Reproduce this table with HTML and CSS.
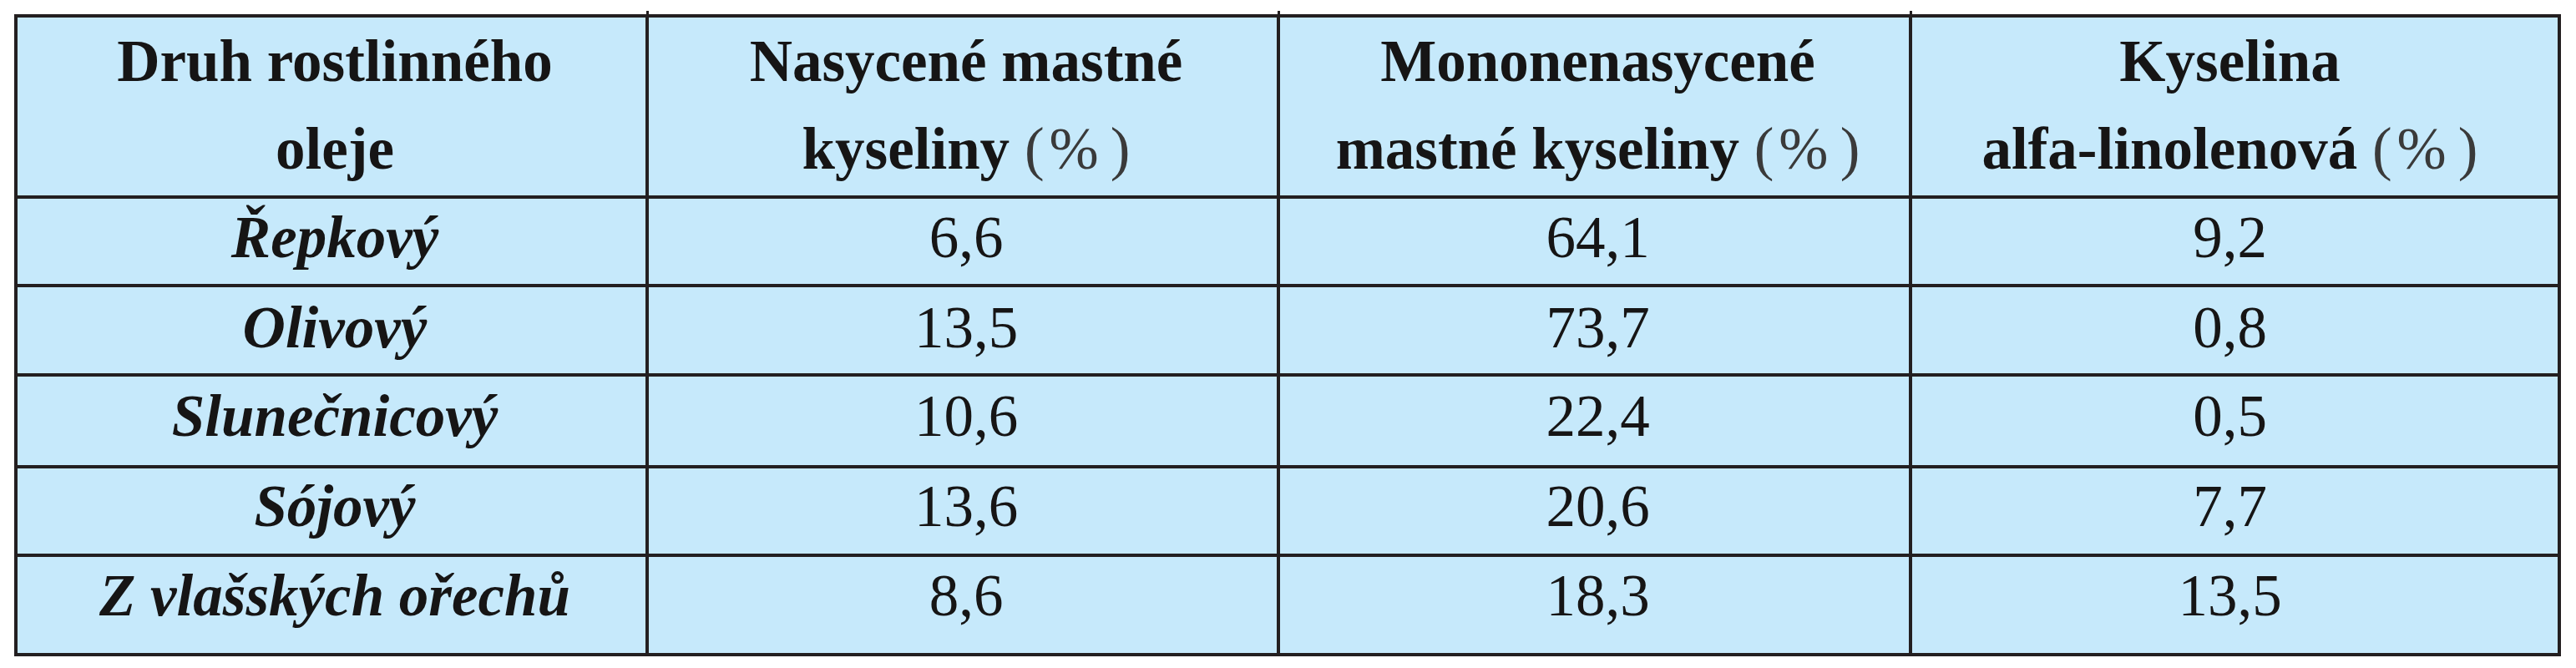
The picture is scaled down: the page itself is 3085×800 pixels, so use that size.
FILE: index.html
```html
<!DOCTYPE html>
<html lang="cs">
<head>
<meta charset="utf-8">
<title>Druh rostlinného oleje</title>
<link rel="stylesheet" href="styles.css">
</head>
<body>
<table class="oils">
  <colgroup>
    <col class="c1"><col class="c2"><col class="c3"><col class="c4">
  </colgroup>
  <thead>
    <tr class="head">
      <th>Druh rostlinného<br>oleje</th>
      <th>Nasycené mastné<br>kyseliny <span class="pct">(&#8202;%&#8201;)</span></th>
      <th>Mononenasycené<br>mastné kyseliny <span class="pct">(&#8202;%&#8201;)</span></th>
      <th>Kyselina<br>alfa-linolenová <span class="pct">(&#8202;%&#8201;)</span></th>
    </tr>
  </thead>
  <tbody>
    <tr class="r1"><td class="name">Řepkový</td><td>6,6</td><td>64,1</td><td>9,2</td></tr>
    <tr class="r2"><td class="name">Olivový</td><td>13,5</td><td>73,7</td><td>0,8</td></tr>
    <tr class="r3"><td class="name">Slunečnicový</td><td>10,6</td><td>22,4</td><td>0,5</td></tr>
    <tr class="r4"><td class="name">Sójový</td><td>13,6</td><td>20,6</td><td>7,7</td></tr>
    <tr class="r5"><td class="name">Z vlašských ořechů</td><td>8,6</td><td>18,3</td><td>13,5</td></tr>
  </tbody>
</table>
</body>
</html>
```
FILE: styles.css
```css
html, body {
  margin: 0;
  padding: 0;
  background: #ffffff;
}

body {
  padding: 17px 0 0 17px;
  font-family: "Liberation Serif", "Times New Roman", serif;
  color: #161515;
}

.oils {
  border-collapse: separate;
  border-spacing: 0;
  table-layout: fixed;
  width: 3050px;
  border-top: 4px solid #231f20;
  border-left: 4px solid #231f20;
  background: #c6e9fb;
}

.c1, .c2 { width: 756px; }
.c3 { width: 757px; }
.c4 { width: 777px; }

.oils th,
.oils td {
  box-sizing: border-box;
  border-right: 4px solid #231f20;
  border-bottom: 4px solid #231f20;
  padding-left: 8px;
  padding-right: 0;
  padding-bottom: 0;
  text-align: center;
  vertical-align: top;
  font-size: 71px;
  white-space: nowrap;
}

.oils th:last-child,
.oils td:last-child {
  padding-left: 0;
  padding-right: 12px;
}

.oils th {
  position: relative;
  font-weight: bold;
  line-height: 105px;
  height: 217px;
  padding-top: 0;
}

.oils th:not(:last-child)::after {
  content: "";
  position: absolute;
  right: -4px;
  top: -8px;
  width: 3px;
  height: 8px;
  background: #231f20;
}

.pct {
  font-weight: normal;
  color: #3a3a3a;
}

.oils td {
  line-height: 71px;
  padding-top: 11px;
  font-weight: normal;
}

.oils td.name {
  font-weight: bold;
  font-style: italic;
}

.r1 td { height: 106px; }
.r2 td { height: 107px; padding-top: 13px; }
.r3 td { height: 110px; padding-top: 12px; }
.r4 td { height: 106px; padding-top: 10px; }
.r5 td { height: 119px; padding-top: 11px; }
```
